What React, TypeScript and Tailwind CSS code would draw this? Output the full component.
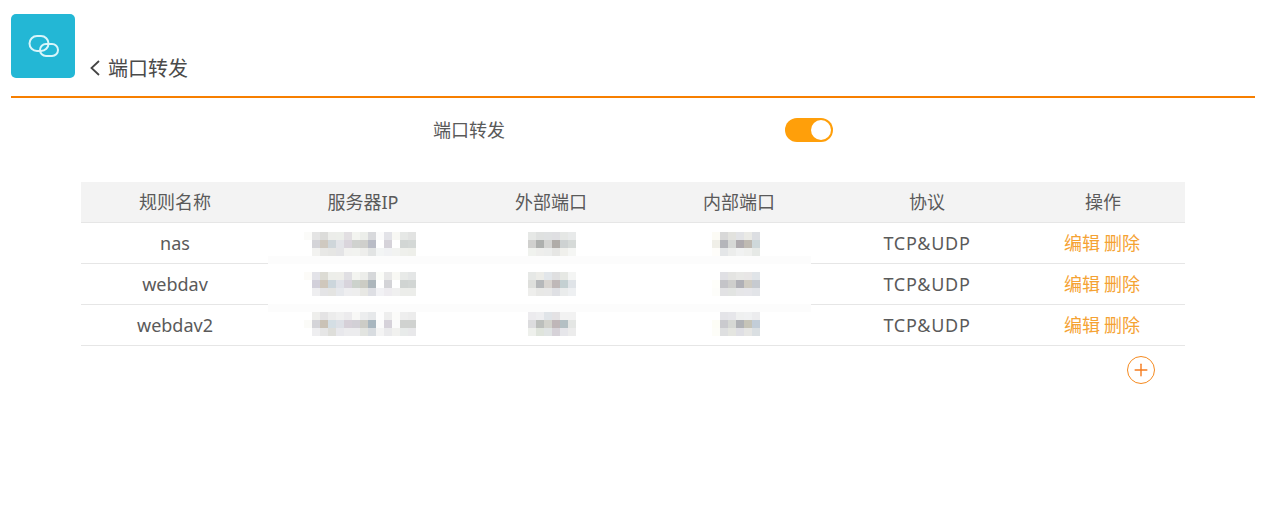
import React from 'react';
import { Plus } from 'lucide-react';

const fontStack = "font-['Noto_Sans','Noto_Sans_CJK_SC',sans-serif]";

type Rule = {
  name: string;
  ip: string[][];
  outer: string[][];
  inner: string[][];
  band?: string;
  shift: string;
};

// the masked values of the reference, one colour per 8px cell
const rules: Rule[] = [
  {
    name: 'nas',
    ip: [
      ['fbfbf9', 'e4e4e4', 'dcdcda', 'ecedea', 'eceeea', 'e2dfe2', 'f3f4f0', 'eceeea', 'd8d9dc', 'fbfbfb', 'e3e3e8', 'f8f8f4', 'e6e8e6', 'e2e3e2'],
      ['ffffff', 'd4d4d8', 'cfc9c0', 'cfd6da', 'e3e4e8', 'dad5dc', 'd0d2cf', 'cfcfcc', 'b9bcc6', 'ffffff', 'd6d3da', 'ffffff', 'd2d6d4', 'd4d8d6'],
      ['ffffff', 'f2f2f0', 'e8e8e6', 'e6e6e4', 'e4e4e6', 'f2f2f0', 'f2f3f0', 'eeeeec', 'e2e4e4', 'f3f5f5', 'f1f2f4', 'f2f3f1', 'eff0ec', 'eeefea'],
    ],
    outer: [
      ['e6e8e6', 'dfe1e0', 'dfe1e2', 'dfdfe2', 'e5e7e5', 'e8eaea'],
      ['d0d0ce', 'aeb0ae', 'd4d4d2', 'b0aca8', 'ced2d2', 'd6dad8'],
      ['f0f2ee', 'eeeeec', 'ecedec', 'e6e6e4', 'f0f0ec', 'f5f6f4'],
    ],
    inner: [
      ['fcfbf5', 'd8d8d8', 'e2e2de', 'e2e3e6', 'eaeae6', 'dcdee2'],
      ['f0efe8', 'b4b5ba', 'd6d8d6', 'aeaaae', 'bfbab2', 'ced8da'],
      ['fefdfa', 'e4e6e8', 'ecedec', 'f1f2f2', 'eff0ee', 'e6e9e6'],
    ],
    band: 'top-[33px]',
    shift: 'translate-y-px',
  },
  {
    name: 'webdav',
    ip: [
      ['fcfbf8', 'e3e3e8', 'dcdbd4', 'edeeea', 'eeeeea', 'e0dfe3', 'f3f4f0', 'ecedea', 'd6d8da', 'fbfcf8', 'e8e8e8', 'f8f8f4', 'e8eae8', 'e4e6e6'],
      ['ffffff', 'd2d0da', 'cfc7bc', 'ccd6dc', 'e0e2e8', 'd8d4dc', 'ccd2cc', 'ccccc4', 'adb6bc', 'ffffff', 'd4d4d8', 'ffffff', 'd0d4d2', 'd2d6d4'],
      ['ffffff', 'eeeef0', 'e4e4e6', 'e4e4e2', 'e6e8ec', 'eeeef0', 'eeeeee', 'e8e8e4', 'dedfe4', 'f2f2f5', 'eeecf0', 'f0f0f0', 'ecedea', 'ecedea'],
    ],
    outer: [
      ['e6e8e6', 'ecece8', 'e2e6ea', 'dfdfe0', 'e6e8e4', 'f4f5f4'],
      ['dedfdc', 'b6b8ba', 'd8d4d0', 'bfb8b8', 'c4d0d2', 'e0e4e8'],
      ['eeeeec', 'e8e8e6', 'e8e8e8', 'dfe0e4', 'eaecec', 'eef0f2'],
    ],
    inner: [
      ['ffffff', 'e0e0e4', 'e4e4e2', 'e8e8e6', 'e8e6e6', 'e0e4e8'],
      ['fefefa', 'c4c4c8', 'cececc', 'b0b0b6', 'cfcbc2', 'c6cad0'],
      ['fdfdfa', 'e2e2e4', 'e2e4e2', 'e6e6e8', 'e6e6ea', 'e2e4e8'],
    ],
    shift: '',
  },
  {
    name: 'webdav2',
    ip: [
      ['ffffff', 'eeeeec', 'e4e3e4', 'ececec', 'f0f0f0', 'ecebed', 'f8f8f6', 'ecedee', 'e6e8ea', 'fdfdfd', 'eeeeee', 'fbfbf9', 'eeeeee', 'ececec'],
      ['fbfbf8', 'd4d4d8', 'cac2b6', 'd4dee4', 'dde0e6', 'd6d0d8', 'd2d0d6', 'ccccc6', 'a8b6bf', 'fbfbfb', 'd6d2da', 'fbfbfb', 'd0d2d0', 'd0d2d0'],
      ['ffffff', 'eeeef0', 'e6e6e6', 'dededa', 'e8e8ec', 'ececee', 'ececee', 'e2e4e0', 'd8dce0', 'f4f4f4', 'eaeaec', 'f1f1ef', 'e8ebea', 'e8e8ea'],
    ],
    outer: [
      ['ecebee', 'eeeef0', 'e0e4e8', 'e4e2e4', 'f2f2f2', 'f2f2f2'],
      ['dcdcde', 'bcbfbc', 'd2d2cc', 'bfb6b8', 'b4c0c4', 'e4e6e4'],
      ['eef0ec', 'dfe4dc', 'e0e4e4', 'd6d2d8', 'e6e6ea', 'ececec'],
    ],
    inner: [
      ['ffffff', 'e4e4e8', 'e6e6ea', 'eff0f0', 'f0f1f2', 'ececee'],
      ['fdfdf6', 'cacace', 'd6d8d4', 'b0b2b6', 'c6c4b8', 'c2cdd8'],
      ['fdfdf8', 'dedfe0', 'e4e5e0', 'dfdfe4', 'e6e6e4', 'dadfe2'],
    ],
    band: '-top-px',
    shift: '-translate-y-px',
  },
];

function Mosaic({ cells }: { cells: string[][] }) {
  const cols = cells[0].length;
  return (
    <svg width={cols * 8} height={24} viewBox={`0 0 ${cols * 8} 24`} shapeRendering="crispEdges" className="block">
      {cells.map((row, y) =>
        row.map((color, x) => <rect key={`${x}-${y}`} x={x * 8} y={y * 8} width={8} height={8} fill={`#${color}`} />),
      )}
    </svg>
  );
}

const headers = ['规则名称', '服务器IP', '外部端口', '内部端口', '协议', '操作'];
const gridCols = 'grid grid-cols-[188px_188px_188px_188px_188px_164px]';

export default function App() {
  return (
    <div className={`h-[520px] w-[1279px] overflow-hidden bg-white text-[18px] leading-none text-[#5a5a5a] ${fontStack}`}>
      <header className="ml-[11px] mr-[24px] flex h-[98px] items-start border-b-2 border-[#f77f00] pt-[14px]">
        <div className="flex h-16 w-16 items-center justify-center rounded-[5px] bg-[#23b7d5]">
          <svg width="64" height="64" viewBox="0 0 64 64" fill="none" stroke="#d8f5fa" strokeWidth="2">
            <rect x="18.5" y="22" width="19" height="15" rx="7.5" />
            <rect x="29" y="30" width="18" height="12" rx="6" />
          </svg>
        </div>
        <div className="ml-[15px] mt-[45px] flex items-center text-[20px] text-[#4a4a4a]">
          <svg width="10" height="16" viewBox="0 0 10 16" fill="none" stroke="#444" strokeWidth="1.8" className="-mt-[2px]">
            <polyline points="9,1 1.5,8 9,15" />
          </svg>
          <span className="ml-[8px]">端口转发</span>
        </div>
      </header>

      <div className="ml-[433px] mt-5 flex h-6 items-center">
        <span className="w-[352px]">端口转发</span>
        <div className="flex h-6 w-12 items-center justify-end rounded-full bg-[#ff9f0a] pr-0.5">
          <div className="h-5 w-5 rounded-full bg-white" />
        </div>
      </div>

      <div className="ml-[81px] mt-10 w-[1104px]">
        <div className={`${gridCols} h-[41px] items-center border-b border-[#e6e6e6] bg-[#f3f3f3] text-center`}>
          {headers.map((h) => (
            <div key={h}>{h}</div>
          ))}
        </div>

        {rules.map((rule) => (
          <div key={rule.name} className={`${gridCols} relative h-[41px] items-center border-b border-[#e6e6e6] text-center`}>
            {rule.band && <div className={`absolute left-[187px] h-2 w-[543px] bg-[#fcfcfc] ${rule.band}`} />}
            <div>{rule.name}</div>
            <div className={`relative flex justify-center pr-[6px] ${rule.shift}`}>
              <Mosaic cells={rule.ip} />
            </div>
            <div className={`relative flex justify-center pl-[2px] ${rule.shift}`}>
              <Mosaic cells={rule.outer} />
            </div>
            <div className={`relative flex justify-center pr-[6px] ${rule.shift}`}>
              <Mosaic cells={rule.inner} />
            </div>
            <div className="tracking-[0.7px]">TCP&amp;UDP</div>
            <div className="flex justify-center gap-1 pr-[2px] text-[#f5a233]">
              <span>编辑</span>
              <span>删除</span>
            </div>
          </div>
        ))}

        <div className="mt-[10px] flex justify-end pr-[30px]">
          <button type="button" className="flex h-7 w-7 items-center justify-center rounded-full border border-[#f58a1f] text-[#f57c1f]">
            <Plus size={20} strokeWidth={1.7} />
          </button>
        </div>
      </div>
    </div>
  );
}
